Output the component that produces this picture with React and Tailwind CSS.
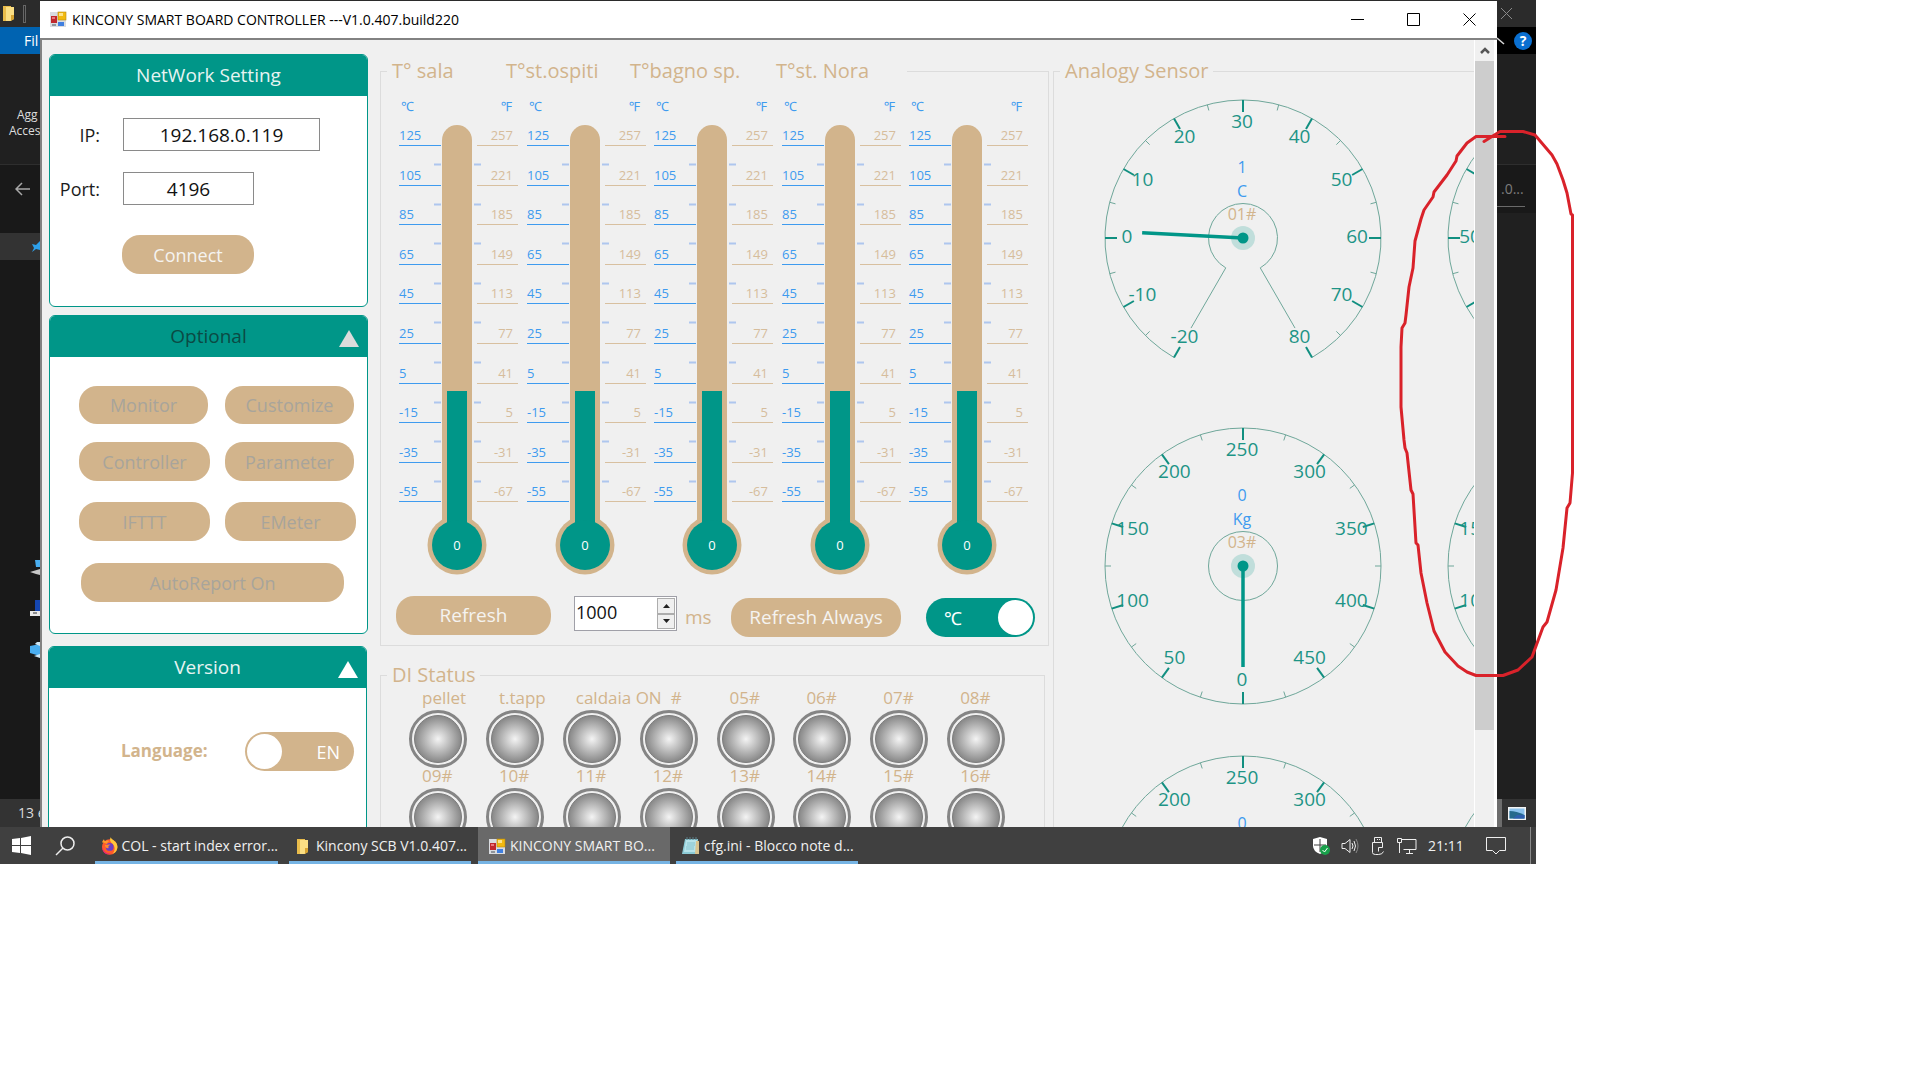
import React from "react";

const TEAL = "#009688";
const TAN = "#d2b48c";
const BLUE = "#3e9bef";
const LINE = "#6fa79a";

function FormIcon({ className }) {
  return (
    <svg viewBox="0 0 17 17" className={className} aria-hidden="true">
      <rect x="0" y="1" width="16" height="15" fill="#d9dce0" />
      <rect x="1" y="5" width="6" height="7" fill="#c0282d" />
      <rect x="2" y="6" width="3" height="2" fill="#e8787c" />
      <rect x="8" y="1" width="8" height="8" fill="#f2b90f" stroke="#b98a10" strokeWidth="0.6" />
      <rect x="9" y="2" width="4" height="3" fill="#fde38a" />
      <rect x="8" y="11" width="6" height="4" fill="#3f7fe0" />
      <rect x="2" y="13" width="4" height="2" fill="#8f959c" />
    </svg>
  );
}

function FolderIcon({ className }) {
  return (
    <svg viewBox="0 0 12 17" className={className} aria-hidden="true">
      <path d="M0 1h8v15H0z" fill="#e9bc4b" />
      <path d="M3 2h8v12l-4 2H3z" fill="#fbdf84" />
      <path d="M8 10h3v4l-3 2z" fill="#d8a431" />
    </svg>
  );
}

function FirefoxIcon({ className }) {
  return (
    <svg viewBox="0 0 18 18" className={className} aria-hidden="true">
      <circle cx="9" cy="10" r="8" fill="#ff5a2a" />
      <path d="M10 0c1 3 7 4 7 10a8 8 0 0 1-5 7c3-3 3-8-1-11-2-2-2-4-1-6z" fill="#ffc73a" />
      <path d="M1 5c1-2 2-3 2-3l1 2c2-1 4-1 5 0-2 0-3 2-2 3z" fill="#ff9a2a" />
      <circle cx="9" cy="10" r="4" fill="#6a3fc4" />
      <path d="M4 8c2 0 4-1 6 0-2 0-3 2-2 3-2 1-4-1-4-3z" fill="#ff8a2a" />
      <path d="M1 9c1 5 4 8 9 8-5 2-9-2-9-8z" fill="#e4237c" />
    </svg>
  );
}

function NotepadIcon({ className }) {
  return (
    <svg viewBox="0 0 18 18" className={className} aria-hidden="true">
      <path d="M3 2h13l-1 15H0z" fill="#8ccbd6" />
      <path d="M4 3h11l-1 12H2z" fill="#b6e3ea" />
      <path d="M14 4h3v13h-4z" fill="#d9c48f" />
      <path d="M5 0v3M8 0v3M11 0v3M14 0v3" stroke="#5c7f88" />
      <path d="M5 6h8M5 8h8M4 10h8M4 12h8" stroke="#74b4c2" strokeWidth="0.7" />
    </svg>
  );
}

function Panel({ title, dim, arrow, className, children }) {
  return (
    <section className={"rounded-md border border-[#009688] bg-white overflow-hidden shrink-0 " + className}>
      <header
        className={
          "relative h-[41px] bg-[#009688] flex items-center justify-center text-[19px] " +
          (dim ? "text-[#0b4a44]" : "text-[#e6f4f2]")
        }
      >
        {title}
        {arrow && (
          <button type="button" aria-label={"Collapse " + title} className="absolute right-2 top-3.5">
            <svg viewBox="0 0 20 17" className="w-5 h-[17px]">
              <path d="M10 0L20 17H0z" fill={dim ? "#dcdcdc" : "#ffffff"} />
            </svg>
          </button>
        )}
      </header>
      {children}
    </section>
  );
}

function Pill({ children, disabled, className }) {
  return (
    <button
      type="button"
      disabled={disabled}
      className={
        "rounded-[18px] bg-[#d2b48c] flex items-center justify-center text-center whitespace-nowrap " +
        (disabled ? "text-[#a8a49b] " : "text-[#f5f3f0] ") +
        className
      }
    >
      {children}
    </button>
  );
}

function Thermometer() {
  const rows = Array.from({ length: 10 }, (_, i) => i);
  const y0 = 65;
  return (
    <svg viewBox="0 0 127 500" className="w-[127px] h-[500px]" fontSize="13" role="img" aria-label="Thermometer">
      <text x="9" y="31" fill={BLUE}>℃</text>
      <text x="120" y="31" textAnchor="end" fill={BLUE}>℉</text>
      <rect x="50" y="45" width="30" height="420" rx="15" fill={TAN} />
      <circle cx="65" cy="465" r="29.5" fill={TAN} />
      {rows.map((i) => {
        const y = y0 + Math.round(i * 39.6);
        return (
          <g key={i}>
            <text x="7" y={y - 5} fill={BLUE}>{125 - 20 * i}</text>
            <text x="121" y={y - 5} textAnchor="end" fill="#d6bd9c">{257 - 36 * i}</text>
            <path d={`M7 ${y + 0.5}H49`} stroke={BLUE} />
            <path d={`M85 ${y + 0.5}H126`} stroke="#d8c0a0" />
            {i < 9 && <path d={`M42 ${y + 19.5}h7M82 ${y + 19.5}h7`} stroke="#aec6ee" strokeWidth="2" />}
          </g>
        );
      })}
      <rect x="55" y="311" width="20" height="145" fill={TEAL} />
      <circle cx="65" cy="465" r="25" fill={TEAL} />
      <text x="65" y="470" textAnchor="middle" fill="#ffffff">0</text>
    </svg>
  );
}

function Gauge({ labels, full, value, unit, name, needle, className }) {
  const c = 140;
  const pt = (r, a) => {
    const t = (a * Math.PI) / 180;
    return [c + r * Math.sin(t), c - r * Math.cos(t)];
  };
  const start = full ? -180 : -150;
  const step = full ? 36 : 30;
  const tick = (a, r1, r2) => {
    const p = pt(r1, a);
    const q = pt(r2, a);
    return `M${p[0]} ${p[1]}L${q[0]} ${q[1]}`;
  };
  const arc = (r) => {
    const p = pt(r, -150);
    const q = pt(r, 150);
    return `M${p[0]} ${p[1]}A${r} ${r} 0 1 1 ${q[0]} ${q[1]}`;
  };
  return (
    <svg viewBox="0 0 280 280" className={"w-[280px] h-[280px] shrink-0 " + (className || "")} role="img" aria-label={"Gauge " + name}>
      <g fill="none" stroke={LINE}>
        {full ? (
          <>
            <circle cx={c} cy={c} r="138" />
            <circle cx={c} cy={c} r="34.5" />
          </>
        ) : (
          <>
            <path d={arc(138)} />
            <path d={arc(34.5)} />
            <path d={tick(-150, 34.5, 104)} />
            <path d={tick(150, 34.5, 104)} />
          </>
        )}
        {Array.from({ length: 10 }, (_, i) => (
          <path key={i} d={tick(start + step * (i + 0.5), 138, 132)} />
        ))}
      </g>
      {labels.map((t, i) => {
        const a = start + step * i;
        const p = pt(115, a);
        return (
          <g key={t}>
            <path d={tick(a, 138, 126)} stroke="#118f80" strokeWidth="2" />
            <text x={p[0] - 1} y={p[1] + 5} fontSize="19" textAnchor="middle" fill="#1d9486">{t}</text>
          </g>
        );
      })}
      <g fontSize="16" textAnchor="middle">
        <text x={c - 1} y="75" fill={BLUE}>{value}</text>
        <text x={c - 1} y="99" fill={BLUE}>{unit}</text>
        <text x={c - 1} y="122" fill={TAN}>{name}</text>
      </g>
      <circle cx={c} cy={c} r="12" fill={TEAL} fillOpacity="0.2" />
      <path d={tick(needle, 0, 101)} stroke={TEAL} strokeWidth="3.5" />
      <circle cx={c} cy={c} r="5.5" fill={TEAL} />
    </svg>
  );
}

function Led({ id }) {
  return (
    <svg viewBox="0 0 60 60" className="w-[60px] h-[60px]" role="img" aria-label={"Input " + id}>
      <defs>
        <radialGradient id={"led" + id}>
          <stop offset="0" stopColor="#f4f4f4" />
          <stop offset="1" stopColor="#868686" />
        </radialGradient>
      </defs>
      <circle cx="30" cy="30" r="27.5" fill="#f0f0f0" stroke="#858585" strokeWidth="3" />
      <circle cx="30" cy="30" r="23.5" fill={`url(#led${id})`} stroke="#7d7d7d" />
    </svg>
  );
}

function Task({ icon, active, children, className }) {
  return (
    <button
      type="button"
      className={
        "h-full pt-1 flex items-center border-b-[3px] border-[#76b4e4] text-left text-sm text-[#f0f0f0] whitespace-nowrap " +
        (active ? "bg-[#696969] " : "") +
        className
      }
    >
      {icon}
      <span>{children}</span>
    </button>
  );
}

const temp = ["-20", "-10", "0", "10", "20", "30", "40", "50", "60", "70", "80"];
const hum = ["0", "25", "50", "75", "100", "125", "150", "175", "200", "225", "250"];
const kg = ["0", "50", "100", "150", "200", "250", "300", "350", "400", "450"];
const diRow1 = ["pellet", "t.tapp", "caldaia ON", "#", "05#", "06#", "07#", "08#"];
const diRow2 = ["09#", "10#", "11#", "12#", "13#", "14#", "15#", "16#"];

function ExplorerLeft() {
  return (
    <div className="w-10 shrink-0 overflow-hidden flex flex-col bg-[#191919] text-[#dcdcdc] whitespace-nowrap text-xs">
      <div className="h-[27px] bg-[#2b2b2b] flex items-center">
        <FolderIcon className="ml-[3px] w-3 h-[17px]" />
        <span className="ml-2 w-[3px] h-[18px] border border-[#666]" />
      </div>
      <button type="button" className="h-[27px] pl-6 bg-[#0063b1] text-left text-sm text-white">Fil</button>
      <div className="h-[111px] bg-[#202020] border-b border-[#2e2e2e] pt-[53px] leading-4">
        <p className="pl-[17px]">Agg</p>
        <p className="pl-[9px]">Acces</p>
      </div>
      <div className="h-12 flex items-center">
        <svg viewBox="0 0 16 14" className="ml-[15px] w-4 h-3.5">
          <path d="M15 7H1M7 1L1 7l6 6" fill="none" stroke="#a8a8a8" strokeWidth="1.5" />
        </svg>
      </div>
      <div className="mt-5 h-[27px] bg-[#333333] flex items-center justify-end">
        <svg viewBox="0 0 8 12" className="w-2 h-3">
          <path d="M0 3l4 1 4-4v9l-4-1-4 3 2-4z" fill="#2ea0ea" />
        </svg>
      </div>
      <div className="flex-1 flex flex-col items-end justify-end gap-6 pb-[141px]">
        <svg viewBox="0 0 10 16" className="w-2.5 h-4">
          <path d="M5 0h5v7H6z" fill="#4aaef0" />
          <path d="M0 12l10-3v6l-4-1z" fill="#c8c8c8" />
        </svg>
        <svg viewBox="0 0 10 18" className="w-2.5 h-[18px]">
          <path d="M5 0h5v12H5z" fill="#1546b0" />
          <path d="M0 11h10v5H0z" fill="#e8e8e8" />
          <path d="M3 13h4" stroke="#333" />
        </svg>
        <svg viewBox="0 0 10 16" className="w-2.5 h-4">
          <path d="M0 4l10-2v12L0 11z" fill="#4aaef0" />
          <path d="M5 2q2-3 5-2v4zM4 14l6-2v4z" fill="#cde6f4" />
        </svg>
      </div>
      <div className="h-[28px] bg-[#333333] pl-[18px] flex items-center text-sm">13 e</div>
    </div>
  );
}

function ExplorerRight() {
  return (
    <div className="w-[39px] shrink-0 overflow-hidden flex flex-col bg-[#202020] whitespace-nowrap">
      <div className="h-[27px] bg-[#2b2b2b] flex items-center">
        <button type="button" aria-label="Close folder" className="ml-[3px]">
          <svg viewBox="0 0 13 13" className="w-[13px] h-[13px]">
            <path d="M1 1l11 11M12 1L1 12" stroke="#8a8a8a" />
          </svg>
        </button>
      </div>
      <div className="h-[27px] bg-black flex items-center">
        <svg viewBox="0 0 8 8" className="w-2 h-2">
          <path d="M0 1l7 6" stroke="#d8d8d8" strokeWidth="1.5" />
        </svg>
        <button type="button" className="ml-[9px] w-[18px] h-[18px] rounded-full bg-[#0a6fd0] text-white text-sm font-bold leading-[18px]">
          ?
        </button>
      </div>
      <div className="h-[111px] border-b border-[#2e2e2e]" />
      <div className="h-12 bg-[#191919] flex items-end pb-[6px]">
        <div className="pl-1 w-7 h-8 pt-1 border-b border-[#6a6a6a] text-sm text-[#7c7c7c]">.0...</div>
      </div>
      <div className="flex-1" />
      <div className="h-[28px] bg-[#333333] flex items-center">
        <span className="w-[5px] h-full bg-[#6d6d6d]" />
        <svg viewBox="0 0 18 13" className="ml-1.5 w-[18px] h-[13px]">
          <rect width="18" height="13" fill="#f4f4f4" />
          <rect x="1.5" y="1.5" width="15" height="10" fill="#8cc3ee" />
          <path d="M1.500 4q7 0 15 4v3.500h-15z" fill="#256a8c" />
          <path d="M9 8h7.500v3.500H5z" fill="#2f5fae" />
        </svg>
      </div>
    </div>
  );
}

function Sidebar() {
  return (
    <aside className="w-[319px] shrink-0 ml-[7px] pt-[14px] flex flex-col text-lg">
      <Panel title="NetWork Setting" className="h-[253px]">
        <form className="pt-[22px]">
          <div className="flex items-center">
            <label htmlFor="ip" className="w-[50px] text-right text-[#1c1c1c]">IP:</label>
            <input id="ip" defaultValue="192.168.0.119" className="ml-[23px] w-[197px] h-[33px] border border-[#8a8a8a] bg-white text-center text-[19px] text-[#111]" />
          </div>
          <div className="mt-[21px] flex items-center">
            <label htmlFor="port" className="w-[50px] text-right text-[#1c1c1c]">Port:</label>
            <input id="port" defaultValue="4196" className="ml-[23px] w-[131px] h-[33px] border border-[#8a8a8a] bg-white text-center text-[19px] text-[#111]" />
          </div>
          <Pill className="ml-[72px] mt-[30px] w-[132px] h-[39px]">Connect</Pill>
        </form>
      </Panel>

      <Panel title="Optional" dim arrow className="mt-2 h-[319px]">
        <div className="pl-[29px] pt-[29px]">
          <div className="flex gap-[17px]">
            <Pill disabled className="w-[129px] h-[38px]">Monitor</Pill>
            <Pill disabled className="w-[129px] h-[38px]">Customize</Pill>
          </div>
          <div className="mt-[18px] flex gap-[15px]">
            <Pill disabled className="w-[131px] h-[39px]">Controller</Pill>
            <Pill disabled className="w-[129px] h-[39px]">Parameter</Pill>
          </div>
          <div className="mt-[21px] flex gap-[15px]">
            <Pill disabled className="w-[131px] h-[39px]">IFTTT</Pill>
            <Pill disabled className="w-[131px] h-[39px]">EMeter</Pill>
          </div>
          <Pill disabled className="ml-0.5 mt-[22px] w-[263px] h-[39px]">AutoReport On</Pill>
        </div>
      </Panel>

      <Panel title="Version" arrow className="-ml-px mr-px mt-3 h-[319px]">
        <div className="pt-11 pl-[72px] flex items-center">
          <span id="lang" className="w-[124px] text-[17px] font-bold text-[#d2b48c]">Language:</span>
          <label className="w-[109px] h-[39px] rounded-full bg-[#d2b48c] p-0.5 flex items-center justify-between cursor-pointer">
            <input type="checkbox" role="switch" aria-labelledby="lang" className="sr-only" />
            <span className="w-[35px] h-[35px] rounded-full bg-white" />
            <span className="pr-3 text-white">EN</span>
          </label>
        </div>
      </Panel>
    </aside>
  );
}

function DiRow({ labels, start }) {
  return (
    <div className="grid grid-cols-8">
      {labels.map((t, i) => (
        <div key={t}>
          <div className={"h-[22px] w-11 leading-[22px] whitespace-nowrap " + (t === "#" ? "pl-8" : "pl-3.5")}>{t}</div>
          <Led id={start + i} />
        </div>
      ))}
    </div>
  );
}

function Middle() {
  return (
    <div className="w-[669px] shrink-0 ml-3 pt-[18px] flex flex-col text-lg text-[#d2b48c]">
      <fieldset className="h-[588px] shrink-0 border border-[#dcdcdc]">
        <legend className="ml-1.5 pl-[5px] w-[520px] leading-[26px] flex whitespace-nowrap text-xl">
          <span className="w-[114px]">T° sala</span>
          <span className="w-[124px]">T°st.ospiti</span>
          <span className="w-[146px]">T°bagno sp.</span>
          <span>T°st. Nora</span>
        </legend>
        <div className="pl-[11px] w-[649px] h-[494px] -mt-1 grid grid-cols-5 overflow-visible">
          {[0, 1, 2, 3, 4].map((i) => (
            <Thermometer key={i} />
          ))}
        </div>
        <div className="relative pl-[15px] pt-[22px] flex items-start">
          <Pill className="w-[155px] h-[39px] text-[19px]">Refresh</Pill>
          <div className="ml-[23px] w-[103px] h-[35px] p-px border border-[#a0a0a8] bg-white flex">
            <input id="interval" defaultValue="1000" className="min-w-0 flex-1 h-7 text-lg text-[#111] bg-white" />
            <div className="w-[18px] flex flex-col">
              <button type="button" aria-label="Increase" className="flex-1 border border-[#adadad] bg-[#f0f0f0] flex items-center justify-center">
                <svg viewBox="0 0 7 4" className="w-[7px] h-1"><path d="M3.500 0L7 4H0z" fill="#222" /></svg>
              </button>
              <button type="button" aria-label="Decrease" className="flex-1 border border-[#adadad] bg-[#f0f0f0] flex items-center justify-center">
                <svg viewBox="0 0 7 4" className="w-[7px] h-1"><path d="M3.500 4L7 0H0z" fill="#222" /></svg>
              </button>
            </div>
          </div>
          <label htmlFor="interval" className="ml-2 mt-[7px] w-[46px] text-[19px]">ms</label>
          <Pill className="mt-0.5 w-[170px] h-[39px] text-[19px]">Refresh Always</Pill>
          <label className="ml-[25px] mt-0.5 w-[109px] h-[39px] rounded-full bg-[#009688] p-0.5 pl-[18px] flex items-center justify-between cursor-pointer">
            <input type="checkbox" role="switch" aria-label="Temperature unit" defaultChecked className="sr-only" />
            <span className="text-white">℃</span>
            <span className="w-[35px] h-[35px] rounded-full bg-white" />
          </label>
        </div>
      </fieldset>

      <fieldset className="mt-4 mr-1 h-[400px] shrink-0 border border-[#dcdcdc]">
        <legend className="ml-1.5 px-[5px] leading-[26px] text-xl">DI Status</legend>
        <div className="pl-[27px] w-[642px] flex flex-col -mt-px text-[17px]">
          <div>
            <DiRow labels={diRow1} start={1} />
          </div>
          <div className="-mt-1">
            <DiRow labels={diRow2} start={9} />
          </div>
        </div>
      </fieldset>
    </div>
  );
}

function Sensors() {
  return (
    <fieldset className="ml-1 mt-[18px] flex-1 min-w-0 h-[1200px] overflow-hidden border border-r-0 border-[#dcdcdc]">
      <legend className="ml-1.5 px-[5px] leading-[26px] text-xl text-[#d2b48c]">Analogy Sensor</legend>
      <div className="pl-[49px] pt-3.5 w-[700px] flex flex-col gap-12">
        <div className="flex gap-[63px]">
          <Gauge labels={temp} value="1" unit="C" name="01#" needle={-87} />
          <Gauge labels={hum} value="0" unit="%" name="02#" needle={-150} />
        </div>
        <div className="flex gap-[63px]">
          <Gauge full labels={kg} value="0" unit="Kg" name="03#" needle={180} />
          <Gauge full labels={kg} value="0" unit="Kg" name="04#" needle={180} />
        </div>
        <div className="flex gap-[63px]">
          <Gauge full labels={kg} value="0" unit="Kg" name="05#" needle={180} />
          <Gauge full labels={kg} value="0" unit="Kg" name="06#" needle={180} />
        </div>
      </div>
    </fieldset>
  );
}

function AppWindow() {
  return (
    <div className="flex-1 min-w-0 flex flex-col border-t border-[#2b2b2b] bg-white">
      <header className="h-[37px] shrink-0 flex items-center">
        <FormIcon className="ml-2.5 w-[17px] h-[17px]" />
        <h1 className="ml-[5px] flex-1 text-sm text-black">KINCONY SMART BOARD CONTROLLER ---V1.0.407.build220</h1>
        <div className="flex items-center gap-[43px] pr-[21px]">
          <button type="button" aria-label="Minimize">
            <svg viewBox="0 0 13 13" className="w-[13px] h-[13px]"><path d="M0 6.500h13" stroke="#000" /></svg>
          </button>
          <button type="button" aria-label="Maximize">
            <svg viewBox="0 0 13 13" className="w-[13px] h-[13px]"><path d="M.5.500h12v12H.5z" fill="none" stroke="#000" /></svg>
          </button>
          <button type="button" aria-label="Close">
            <svg viewBox="0 0 13 13" className="w-[13px] h-[13px]"><path d="M.5.500l12 12M12.500.500l-12 12" stroke="#000" /></svg>
          </button>
        </div>
      </header>
      <div className="flex-1 min-h-0 flex border-t-2 border-l-2 border-[#828282]">
        <main className="flex-1 min-w-0 flex items-start overflow-hidden bg-[#f0f0f0]">
          <Sidebar />
          <Middle />
          <Sensors />
        </main>
        <div className="w-[19px] ml-px mr-[3px] bg-[#f0f0f0] flex flex-col">
          <button type="button" aria-label="Scroll up" className="h-[21px] flex items-center justify-center">
            <svg viewBox="0 0 10 7" className="w-2.5 h-[7px]"><path d="M1 6l4-4 4 4" fill="none" stroke="#555" strokeWidth="2.500" /></svg>
          </button>
          <div className="h-[85%] bg-[#cdcdcd]" />
        </div>
      </div>
    </div>
  );
}

function Taskbar() {
  return (
    <footer className="h-[37px] shrink-0 flex items-center bg-[#404040] text-[#f0f0f0]">
      <button type="button" aria-label="Start" className="ml-3">
        <svg viewBox="0 0 19 19" className="w-[19px] h-[19px]" fill="#fff">
          <path d="M0 3l8-1v7H0zM9 2l10-2v9H9zM0 10h8v7l-8-1zM9 10h10v9L9 17z" />
        </svg>
      </button>
      <button type="button" aria-label="Search" className="ml-6">
        <svg viewBox="0 0 20 20" className="w-5 h-5" fill="none" stroke="#eee" strokeWidth="1.500">
          <circle cx="12.500" cy="7.500" r="6.500" />
          <path d="M8 12l-7 7" />
        </svg>
      </button>
      <Task className="ml-5 w-[183px] pl-1.5 gap-[3px]" icon={<FirefoxIcon className="w-[18px] h-[18px]" />}>COL - start index error...</Task>
      <Task className="ml-[11px] w-[182px] pl-2 gap-[7px]" icon={<FolderIcon className="w-3 h-[17px]" />}>Kincony SCB V1.0.407...</Task>
      <Task active className="ml-[7px] w-[192px] pl-[11px] gap-1" icon={<FormIcon className="w-[17px] h-[17px]" />}>KINCONY SMART BO...</Task>
      <Task className="ml-1.5 w-[182px] pl-1.5 gap-1" icon={<NotepadIcon className="w-[18px] h-[18px]" />}>cfg.ini - Blocco note d...</Task>
      <div className="flex-1" />
      <svg viewBox="0 0 18 18" className="w-[18px] h-[18px]">
        <path d="M8 0l7 2v7q0 5-7 8Q1 14 1 9V2z" fill="#fff" />
        <path d="M8 2v13M2 8h12" stroke="#404040" />
        <circle cx="13" cy="13" r="5" fill="#18a04a" />
        <path d="M10.500 13l2 2 3-4" fill="none" stroke="#fff" />
      </svg>
      <svg viewBox="0 0 18 16" className="ml-[11px] w-[18px] h-4" fill="none" stroke="#eee">
        <path d="M1 5.500h3l5-4v13l-5-4H1z" />
        <path d="M11 5q2 3 0 6M13 3q3 5 0 10" />
        <path d="M15 1q4 7 0 14" stroke="#8a8a8a" />
      </svg>
      <svg viewBox="0 0 14 18" className="ml-3 w-3.5 h-[18px]" fill="none" stroke="#eee">
        <path d="M3.500 5V.500h7V5M1.500 5.500h10M1.500 5.500v10q0 2 3 2h3q4 0 5-3M6 2.500h1M8 2.500h1M11.500 5.500v5h-4v4" />
      </svg>
      <svg viewBox="0 0 20 16" className="ml-3 w-5 h-4" fill="none" stroke="#eee">
        <path d="M4 1.500h15v10H6.500M.5.500h4v4h-4zM2.500 5v10M12.500 12v3M9 15.500h7" />
      </svg>
      <time className="ml-[11px] w-9 text-sm">21:11</time>
      <button type="button" aria-label="Notifications" className="ml-[22px]">
        <svg viewBox="0 0 20 19" className="w-5 h-[19px]" fill="none" stroke="#eee">
          <path d="M.5 1.500h19v13h-6l-3.500 3.500-3.500-3.500H.5z" />
        </svg>
      </button>
      <span className="ml-6 mr-[5px] w-px h-full bg-[#8a8a8a]" />
    </footer>
  );
}

export default function App() {
  return (
    <div className="min-h-screen bg-white overflow-hidden font-['Open_Sans','Noto_Sans','Noto_Sans_CJK_SC',sans-serif]">
      <div className="relative w-4/5 h-[80vh] flex flex-col">
        <div className="flex-1 min-h-0 flex">
          <ExplorerLeft />
          <AppWindow />
          <ExplorerRight />
        </div>
        <Taskbar />
        <svg viewBox="1396 128 180 552" className="absolute -right-10 top-32 w-[180px] h-[552px] pointer-events-none" aria-hidden="true">
          <path
            d="M1505 136.500H1476L1467 143L1457 156L1456 161L1447 175L1434 192L1433 197L1424 210L1421 219L1415 241L1413 268L1409 287L1406 315L1405 323L1402 328L1401 347V407L1404 440L1405 448L1407 453L1411 490L1413 494L1416 543L1418 545L1421 573L1427 603L1434 631L1445 652L1458 666L1467 672L1476 675.500H1503L1518 670L1532 657L1543 627L1547 622L1556 590L1563 548L1567 508L1570 503L1572.500 473V215L1571 214L1567 193L1563 180L1557 164L1552 155L1535 135L1523 131.500H1500L1484 141.500"
            fill="none"
            stroke="#d9222a"
            strokeWidth="3"
            strokeLinejoin="round"
            strokeLinecap="round"
          />
        </svg>
      </div>
    </div>
  );
}
